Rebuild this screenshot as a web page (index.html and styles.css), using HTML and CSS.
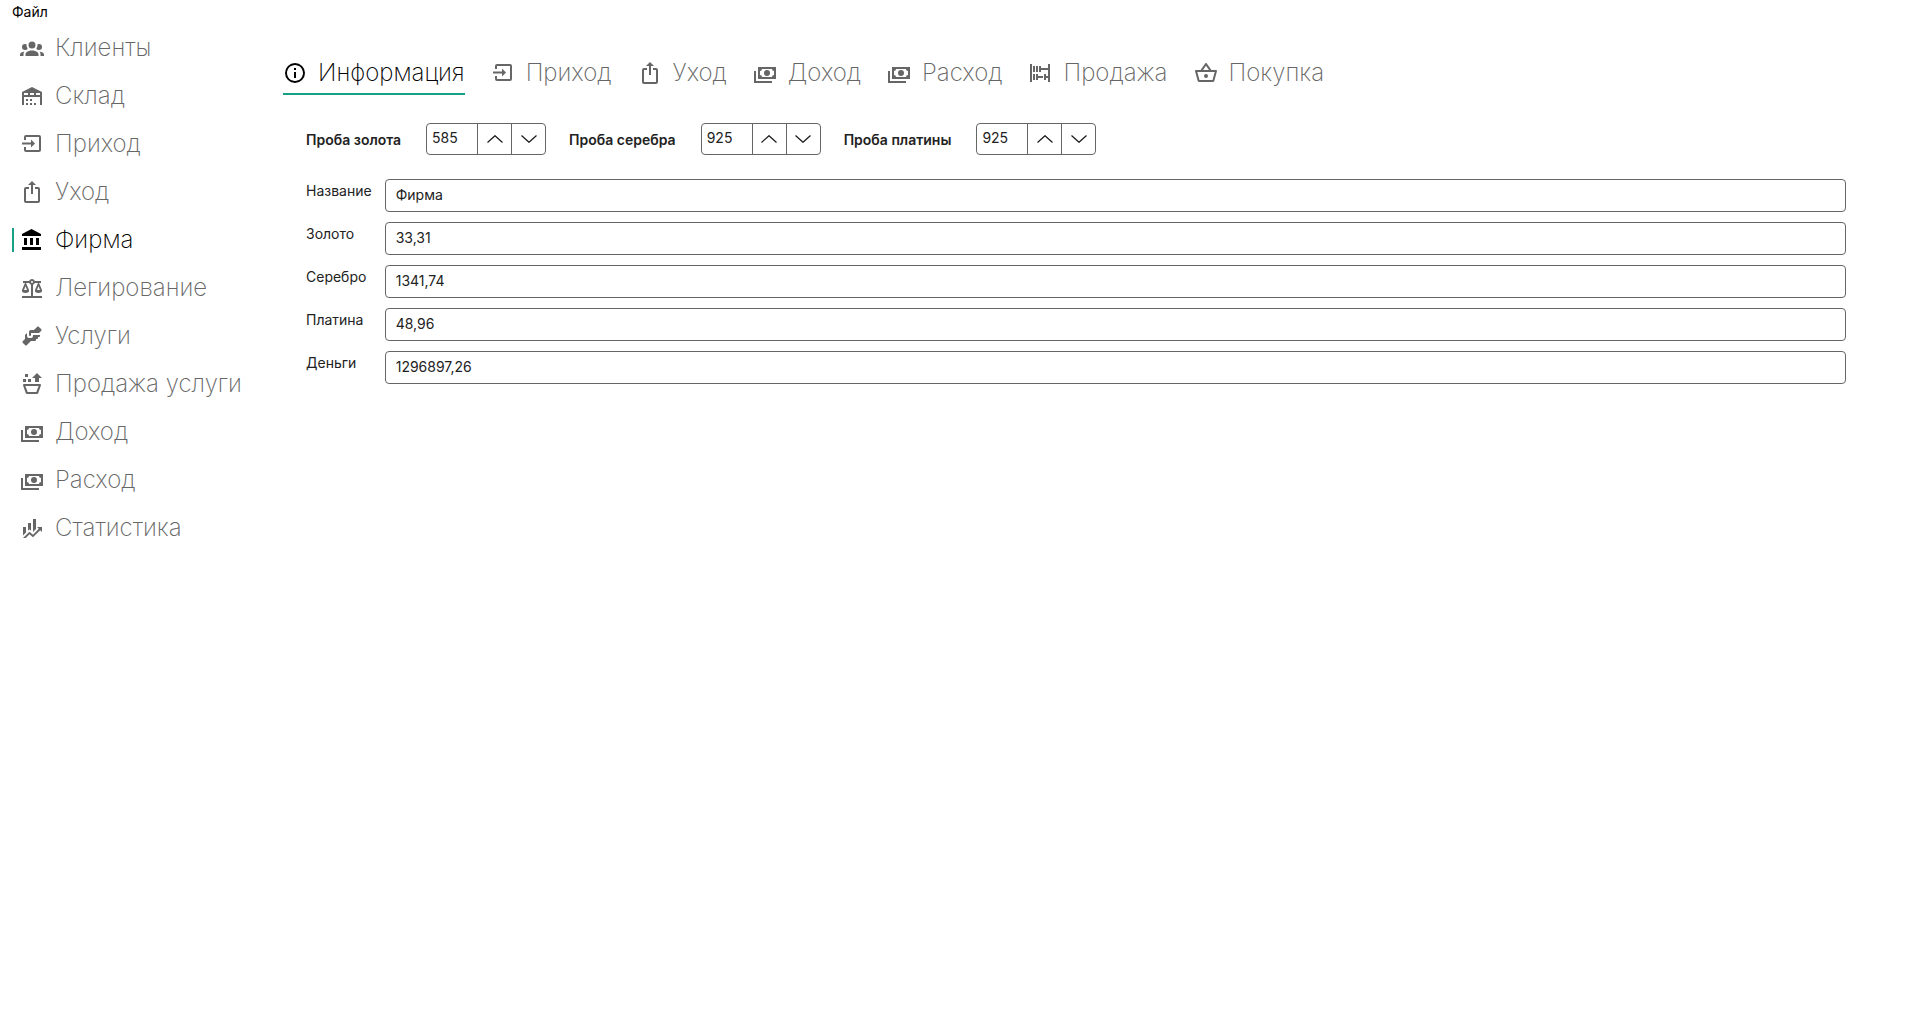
FILE: index.html
```html
<!DOCTYPE html>
<html lang="ru">
<head>
<meta charset="utf-8">
<title>Фирма</title>
<link rel="stylesheet" href="styles.css">
</head>
<body>
<svg class="sprite" aria-hidden="true">
  <symbol id="i-group" viewBox="0 0 24 24"><path d="M12,5.5A3.5,3.5 0 0,1 15.5,9A3.5,3.5 0 0,1 12,12.5A3.5,3.5 0 0,1 8.5,9A3.5,3.5 0 0,1 12,5.5M5,8C5.56,8 6.08,8.15 6.53,8.42C6.38,9.85 6.8,11.27 7.66,12.38C7.16,13.34 6.16,14 5,14A3,3 0 0,1 2,11A3,3 0 0,1 5,8M19,8A3,3 0 0,1 22,11A3,3 0 0,1 19,14C17.84,14 16.84,13.34 16.34,12.38C17.2,11.27 17.62,9.85 17.47,8.42C17.92,8.15 18.44,8 19,8M5.5,18.25C5.5,16.18 8.41,14.5 12,14.5C15.59,14.5 18.5,16.18 18.5,18.25V20H5.5V18.25M0,20V18.5C0,17.11 1.89,15.94 4.45,15.6C3.86,16.28 3.5,17.22 3.5,18.25V20H0M24,20H20.5V18.25C20.5,17.22 20.14,16.28 19.55,15.6C22.11,15.94 24,17.11 24,18.5V20Z"/></symbol>
  <symbol id="i-warehouse" viewBox="0 0 24 24"><path d="M6 19H8V21H6V19M12 3L2 8V21H4V13H20V21H22V8L12 3M8 11H4V9H8V11M14 11H10V9H14V11M20 11H16V9H20V11M6 15H8V17H6V15M10 15H12V17H10V15M10 19H12V21H10V19M14 19H16V21H14V19Z"/></symbol>
  <symbol id="i-in" viewBox="0 0 24 24"><path d="M4 8V5A2 2 0 0 1 6 3H19A2 2 0 0 1 21 5V18A2 2 0 0 1 19 20H6A2 2 0 0 1 4 18V15H6V18H19V5H6V8H4M11 7.500L15 11.500L11 15.500V12.500H2V10.500H11V7.500Z"/></symbol>
  <symbol id="i-out" viewBox="0 0 24 24"><path d="M12,1L8,5H11V14H13V5H16M18,23H6C4.89,23 4,22.1 4,21V9A2,2 0 0,1 6,7H9V9H6V21H18V9H15V7H18A2,2 0 0,1 20,9V21A2,2 0 0,1 18,23Z"/></symbol>
  <symbol id="i-bank" viewBox="0 0 24 24"><path d="M11.5,1L2,6V8H21V6M16,10V17H19V10M2,22H21V19H2M10,10V17H13V10M4,10V17H7V10H4Z"/></symbol>
  <symbol id="i-scale" viewBox="0 0 24 24"><path d="M12,3C10.73,3 9.6,3.8 9.18,5H3V7H4.95L2,14C1.53,16 3,17 5.5,17C8,17 9.56,16 9,14L6.05,7H9.17C9.5,7.85 10.15,8.5 11,8.83V20H2V22H22V20H13V8.82C13.85,8.5 14.5,7.85 14.82,7H17.95L15,14C14.53,16 16,17 18.5,17C21,17 22.56,16 22,14L19.05,7H21V5H14.83C14.4,3.8 13.27,3 12,3M12,5A1,1 0 0,1 13,6A1,1 0 0,1 12,7A1,1 0 0,1 11,6A1,1 0 0,1 12,5M5.5,10.25L7,14H4L5.5,10.25M18.5,10.25L20,14H17L18.5,10.25Z"/></symbol>
  <symbol id="i-handshake" viewBox="0 0 24 24"><path d="M11 6H14L17.29 2.7A1 1 0 0 1 18.71 2.7L21.29 5.29A1 1 0 0 1 21.29 6.7L19 9H11V11A1 1 0 0 1 10 12A1 1 0 0 1 9 11V8A2 2 0 0 1 11 6M5 11V15L2.71 17.29A1 1 0 0 0 2.71 18.71L5.29 21.29A1 1 0 0 0 6.71 21.29L11 17H15A1 1 0 0 0 16 16V15H17A1 1 0 0 0 18 14V13H19A1 1 0 0 0 20 12V11H13V12A2 2 0 0 1 11 14H9A2 2 0 0 1 7 12V9L5 11Z"/></symbol>
  <symbol id="i-unfill" viewBox="0 0 24 24"><path d="M3 10H6V7H3V10M5 5H8V2H5V5M8 10H11V7H8V10M17 1L12 6H15V10H19V6H22L17 1M7.5 22C6.72 22 6.04 21.55 5.71 20.9L3.1 13.44L3 13A1 1 0 0 1 4 12H20A1 1 0 0 1 21 13L20.96 13.29L18.29 20.9C17.96 21.55 17.28 22 16.5 22H7.5M7.61 20H16.39L18.57 14H5.42L7.61 20Z"/></symbol>
  <symbol id="i-cash" viewBox="0 0 24 24"><path d="M5,6H23V18H5V6M14,9A3,3 0 0,1 17,12A3,3 0 0,1 14,15A3,3 0 0,1 11,12A3,3 0 0,1 14,9M9,8A2,2 0 0,1 7,10V14A2,2 0 0,1 9,16H19A2,2 0 0,1 21,14V10A2,2 0 0,1 19,8H9M1,10H3V20H19V22H1V10Z"/></symbol>
  <symbol id="i-finance" viewBox="0 0 24 24"><path d="M6,16.5L3,19.44V11H6M11,14.66L9.43,13.32L8,14.64V7H11M16,13L13,16V3H16M18.81,12.81L17,11H22V16L20.21,14.21L13,21.36L9.53,18.34L5.75,22H3L9.47,15.66L13,18.64"/></symbol>
  <symbol id="i-info" viewBox="0 0 24 24"><path d="M11,9H13V7H11M12,20C7.59,20 4,16.41 4,12C4,7.59 7.59,4 12,4C16.41,4 20,7.59 20,12C20,16.41 16.41,20 12,20M12,2A10,10 0 0,0 2,12A10,10 0 0,0 12,22A10,10 0 0,0 22,12A10,10 0 0,0 12,2M11,17H13V11H11V17Z"/></symbol>
  <symbol id="i-abacus" viewBox="0 0 24 24"><path d="M5 5H7V11H5V5M10 5H8V11H10V5M5 19H7V13H5V19M10 13H8V19H10V17H15V15H10V13M2 21H4V3H2V21M20 3V7H13V5H11V11H13V9H20V15H18V13H16V19H18V17H20V21H22V3H20Z"/></symbol>
  <symbol id="i-basket" viewBox="0 0 24 24"><path d="M5.5,21C4.72,21 4.04,20.55 3.71,19.9V19.9L1.1,10.44L1,10A1,1 0 0,1 2,9H6.58L11.18,2.43C11.36,2.17 11.66,2 12,2C12.34,2 12.65,2.17 12.83,2.44L17.42,9H22A1,1 0 0,1 23,10L22.96,10.29L20.29,19.9C19.96,20.55 19.28,21 18.5,21H5.5M12,4.74L9,9H15L12,4.74M5.5,19H18.5L20.7,11H3.31L5.5,19M12,13A2,2 0 0,1 14,15A2,2 0 0,1 12,17A2,2 0 0,1 10,15A2,2 0 0,1 12,13Z"/></symbol>
  <symbol id="i-up" viewBox="0 0 16 8"><path class="chevron" d="M0.500 7.500L8 0.700L15.500 7.500"/></symbol>
  <symbol id="i-down" viewBox="0 0 16 8"><path class="chevron" d="M0.500 0.500L8 7.300L15.500 0.500"/></symbol>
</svg>

<header class="menubar"><button type="button" class="menu-item">Файл</button></header>

<div class="app">
  <nav class="sidebar">
    <a class="nav-item" href="#clients"><svg class="icon"><use href="#i-group"/></svg>Клиенты</a>
    <a class="nav-item" href="#stock"><svg class="icon"><use href="#i-warehouse"/></svg>Склад</a>
    <a class="nav-item" href="#incoming"><svg class="icon"><use href="#i-in"/></svg>Приход</a>
    <a class="nav-item" href="#outgoing"><svg class="icon"><use href="#i-out"/></svg>Уход</a>
    <a class="nav-item active" href="#firm" aria-current="page"><svg class="icon"><use href="#i-bank"/></svg>Фирма</a>
    <a class="nav-item" href="#alloying"><svg class="icon"><use href="#i-scale"/></svg>Легирование</a>
    <a class="nav-item" href="#services"><svg class="icon"><use href="#i-handshake"/></svg>Услуги</a>
    <a class="nav-item" href="#service-sales"><svg class="icon"><use href="#i-unfill"/></svg>Продажа услуги</a>
    <a class="nav-item" href="#income"><svg class="icon"><use href="#i-cash"/></svg>Доход</a>
    <a class="nav-item" href="#expense"><svg class="icon"><use href="#i-cash"/></svg>Расход</a>
    <a class="nav-item" href="#statistics"><svg class="icon"><use href="#i-finance"/></svg>Статистика</a>
  </nav>

  <main class="content">
    <div class="tabs" role="tablist">
      <button type="button" class="tab active" role="tab" aria-selected="true"><svg class="icon"><use href="#i-info"/></svg>Информация</button>
      <button type="button" class="tab" role="tab"><svg class="icon"><use href="#i-in"/></svg>Приход</button>
      <button type="button" class="tab" role="tab"><svg class="icon"><use href="#i-out"/></svg>Уход</button>
      <button type="button" class="tab" role="tab"><svg class="icon"><use href="#i-cash"/></svg>Доход</button>
      <button type="button" class="tab" role="tab"><svg class="icon"><use href="#i-cash"/></svg>Расход</button>
      <button type="button" class="tab" role="tab"><svg class="icon"><use href="#i-abacus"/></svg>Продажа</button>
      <button type="button" class="tab" role="tab"><svg class="icon"><use href="#i-basket"/></svg>Покупка</button>
    </div>

    <form class="panel">
      <div class="purities">
        <div class="purity">
          <label for="gold-purity">Проба золота</label>
          <div class="spinner">
            <input id="gold-purity" type="text" inputmode="numeric" value="585">
            <button type="button" aria-label="Больше"><svg><use href="#i-up"/></svg></button>
            <button type="button" aria-label="Меньше"><svg><use href="#i-down"/></svg></button>
          </div>
        </div>
        <div class="purity">
          <label for="silver-purity">Проба серебра</label>
          <div class="spinner">
            <input id="silver-purity" type="text" inputmode="numeric" value="925">
            <button type="button" aria-label="Больше"><svg><use href="#i-up"/></svg></button>
            <button type="button" aria-label="Меньше"><svg><use href="#i-down"/></svg></button>
          </div>
        </div>
        <div class="purity">
          <label for="platinum-purity">Проба платины</label>
          <div class="spinner">
            <input id="platinum-purity" type="text" inputmode="numeric" value="925">
            <button type="button" aria-label="Больше"><svg><use href="#i-up"/></svg></button>
            <button type="button" aria-label="Меньше"><svg><use href="#i-down"/></svg></button>
          </div>
        </div>
      </div>

      <div class="fields">
        <label for="name">Название</label><input id="name" type="text" value="Фирма">
        <label for="gold">Золото</label><input id="gold" type="text" value="33,31">
        <label for="silver">Серебро</label><input id="silver" type="text" value="1341,74">
        <label for="platinum">Платина</label><input id="platinum" type="text" value="48,96">
        <label for="money">Деньги</label><input id="money" type="text" value="1296897,26">
      </div>
    </form>
  </main>
</div>
</body>
</html>
```
FILE: styles.css
```css
* { box-sizing: border-box; }

body {
  margin: 0;
  background: #fff;
  color: #222;
  font: 14px/20px Inter, "Noto Sans", sans-serif;
}

button, input {
  margin: 0;
  padding: 0;
  border: 0;
  background: none;
  color: inherit;
  font: inherit;
}

.sprite { display: none; }

.icon {
  width: 24px;
  height: 24px;
  flex: none;
  fill: currentColor;
}

.menubar {
  display: flex;
  height: 24px;
  padding-left: 12px;
}

.menu-item {
  height: 24px;
  color: #000;
}

.app {
  display: flex;
  align-items: flex-start;
}

.sidebar {
  flex: none;
  width: 271px;
  padding-left: 12px;
}

.nav-item {
  display: flex;
  align-items: center;
  gap: 11px;
  position: relative;
  height: 48px;
  padding-left: 8px;
  color: #666;
  font-size: 24px;
  font-weight: 200;
  text-decoration: none;
}

.nav-item.active, .tab.active { color: #000; }

.nav-item.active::before {
  content: "";
  position: absolute;
  left: 0;
  top: 12px;
  width: 2px;
  height: 24px;
  background: #16a085;
}

.content {
  flex: 1;
  min-width: 0;
  padding: 24px 74px 0 0;
}

.tabs {
  display: flex;
  padding-left: 12px;
  gap: 26px;
}

.tab {
  display: flex;
  align-items: center;
  gap: 11px;
  height: 47px;
  padding-top: 4px;
  border-bottom: 2px solid transparent;
  color: #666;
  font-size: 24px;
  font-weight: 200;
}

.tab.active { border-color: #16a085; }

.panel { padding: 28px 0 0 35px; }

.purities {
  display: flex;
  gap: 23px;
}

.purity {
  display: flex;
  align-items: center;
  gap: 25px;
  font-weight: 600;
}

.purity label { padding-top: 2px; }

.spinner {
  display: flex;
  width: 120px;
  height: 32px;
  border: 1px solid #666;
  border-radius: 4px;
  font-weight: 400;
}

.spinner input {
  flex: 1;
  min-width: 0;
  padding: 0 0 2px 5px;
}

.spinner button {
  display: grid;
  place-items: center;
  width: 34px;
  border-left: 1px solid #666;
}

.spinner svg {
  width: 16px;
  height: 8px;
}

.chevron {
  fill: none;
  stroke: #1a1a1a;
  stroke-width: 1.2;
}

.fields {
  display: grid;
  grid-template-columns: auto 1fr;
  gap: 10px 13px;
  padding-top: 24px;
}

.fields label { padding-top: 2px; }

.fields input {
  height: 33px;
  padding: 0 10px 2px;
  border: 1px solid #666;
  border-radius: 4px;
}
```
